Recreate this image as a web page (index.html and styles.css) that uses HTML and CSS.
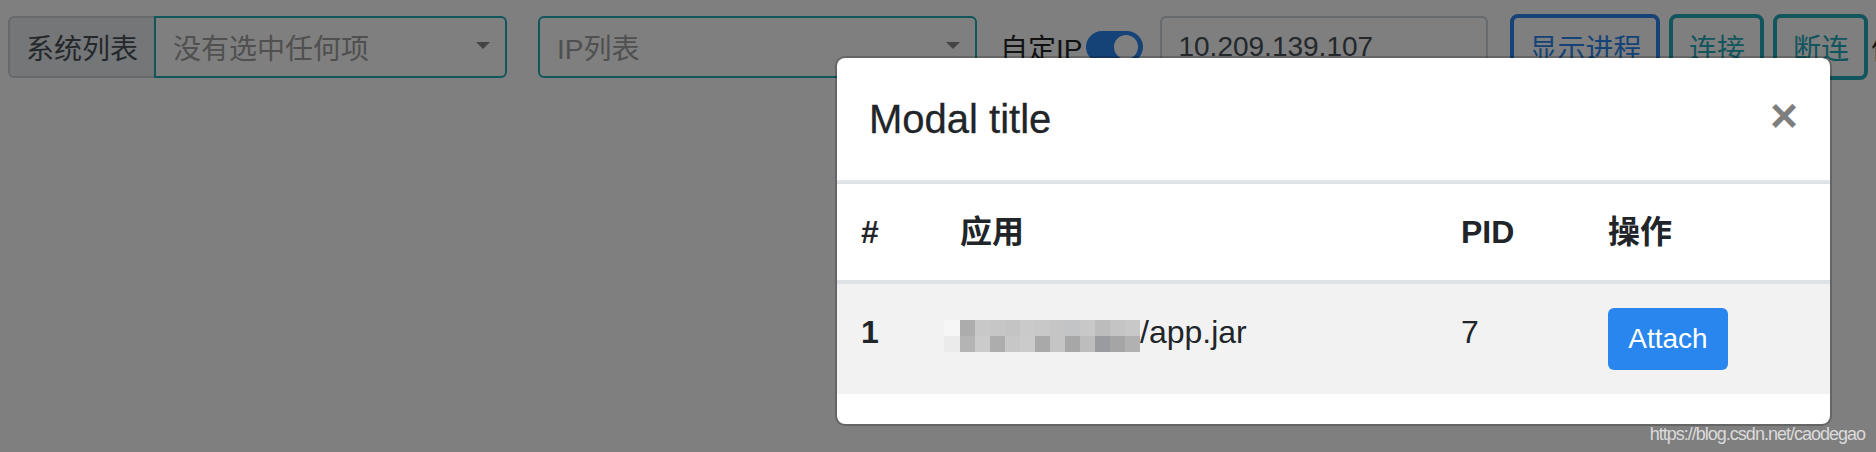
FILE: index.html
```html
<!DOCTYPE html>
<html lang="zh">
<head>
<meta charset="utf-8">
<title>Modal</title>
<link rel="stylesheet" href="styles.css">
</head>
<body>
<div class="toolbar">
  <div class="input-group">
    <span class="addon">系统列表</span>
    <div class="select sel-sys"><span>没有选中任何项</span><span class="caret"></span></div>
  </div>
  <div class="select sel-ip"><span>IP列表</span><span class="caret"></span></div>
  <span class="switch-label">自定IP</span>
  <span class="switch"><span class="knob"></span></span>
  <div class="ip-input">10.209.139.107</div>
  <button class="btn btn-primary-outline">显示进程</button>
  <button class="btn btn-info-outline">连接</button>
  <button class="btn btn-info-outline">断连</button>
  <span class="more">修改</span>
</div>

<div class="backdrop"></div>

<div class="modal">
  <div class="modal-header">
    <h5 class="modal-title">Modal title</h5>
    <button class="close">&times;</button>
  </div>
  <table class="table">
    <colgroup>
      <col class="w1"><col class="w2"><col class="w3"><col class="w4">
    </colgroup>
    <thead>
      <tr><th>#</th><th>应用</th><th>PID</th><th>操作</th></tr>
    </thead>
    <tbody>
      <tr>
        <td class="strong">1</td>
        <td><span class="mosaic"><span class="grid">
          <i style="background:#f6f6f6"></i><i style="background:#acacac"></i><i style="background:#c8c8c8"></i><i style="background:#c6c6c6"></i><i style="background:#c4c4c4"></i><i style="background:#cacaca"></i><i style="background:#c8c8c8"></i><i style="background:#c5c5c5"></i><i style="background:#c2c4c6"></i><i style="background:#c8c8c8"></i><i style="background:#bcbcbc"></i><i style="background:#c4c4c4"></i><i style="background:#c8c8c8"></i>
          <i style="background:#ebebeb"></i><i style="background:#b4b4b4"></i><i style="background:#cbcbcb"></i><i style="background:#adadad"></i><i style="background:#c7c7c7"></i><i style="background:#cbcbcb"></i><i style="background:#a9a9a9"></i><i style="background:#c5c5c5"></i><i style="background:#a7a7a7"></i><i style="background:#bdbdbd"></i><i style="background:#999ba1"></i><i style="background:#a5a5a5"></i><i style="background:#b1b1b1"></i>
        </span></span>/app.jar</td>
        <td>7</td>
        <td><button class="btn-attach">Attach</button></td>
      </tr>
    </tbody>
  </table>
</div>

<div class="watermark">https://blog.csdn.net/caodegao</div>
</body>
</html>
```

FILE: styles.css
```css
* { box-sizing: border-box; }
html, body { margin: 0; padding: 0; }
body {
  width: 1876px;
  height: 452px;
  overflow: hidden;
  position: relative;
  background: #fff;
  font-family: "Liberation Sans", "Noto Sans CJK SC", sans-serif;
  color: #212529;
}

/* ---------- toolbar (behind backdrop) ---------- */
.toolbar {
  display: flex;
  align-items: center;
  padding: 14px 0 0 8px;
  white-space: nowrap;
  font-size: 28px;
}
.toolbar > * { flex-shrink: 0; }

.input-group { display: flex; width: 499px; height: 62px; }
.addon {
  width: 146px;
  display: flex;
  align-items: center;
  justify-content: center;
  background: #e9ecef;
  border: 2px solid #ced4da;
  border-right: 0;
  border-radius: 6px 0 0 6px;
  color: #495057;
}
.select {
  display: flex;
  align-items: center;
  height: 62px;
  padding: 0 15px 0 17px;
  border: 2px solid #22aabb;
  border-radius: 6px;
  background: #fff;
  color: #a0a0a0;
}
.sel-sys { flex: 1; border-radius: 0 6px 6px 0; }
.sel-ip { width: 439px; margin-left: 31px; }
.caret {
  margin-left: auto;
  margin-top: -3px;
  width: 0;
  height: 0;
  border-left: 7px solid transparent;
  border-right: 7px solid transparent;
  border-top: 7px solid #888;
}
.switch-label { margin-left: 23px; color: #212529; }
.switch {
  margin-left: 4px;
  width: 57px;
  height: 32px;
  border-radius: 16px;
  background: #2a86ef;
  display: flex;
  align-items: center;
  justify-content: flex-end;
  padding-right: 5px;
}
.knob { width: 24px; height: 24px; border-radius: 50%; background: #fff; }
.ip-input {
  margin-left: 17px;
  width: 328px;
  height: 62px;
  border: 2px solid #ced4da;
  border-radius: 6px;
  padding-left: 16px;
  display: flex;
  align-items: center;
  color: #495057;
  background: #fff;
}
.btn {
  font: inherit;
  height: 66px;
  border: 4px solid;
  border-radius: 8px;
  background: transparent;
  padding: 0;
  text-align: center;
  margin-left: 9px;
}
.btn-primary-outline { width: 150px; margin-left: 22px; color: #2a86ef; border-color: #2a86ef; }
.btn-info-outline { width: 95px; color: #22aabb; border-color: #22aabb; }
.more { margin-left: 3px; color: #212529; }

/* ---------- backdrop ---------- */
.backdrop {
  position: absolute;
  inset: 0;
  background: rgba(0, 0, 0, 0.5);
}

/* ---------- modal ---------- */
.modal {
  position: absolute;
  left: 835px;
  top: 56px;
  width: 997px;
  background: #fff;
  border: 2px solid rgba(0, 0, 0, 0.2);
  border-radius: 10px;
  background-clip: padding-box;
}
.modal-header {
  display: flex;
  align-items: flex-start;
  padding: 31px 32px;
  border-bottom: 2px solid #e3e6ea;
}
.modal-title {
  margin: 0;
  font-size: 40px;
  line-height: 60px;
  font-weight: normal;
  color: #212529;
  -webkit-text-stroke: 0.3px #212529;
}
.close {
  margin: 3px 0 0 auto;
  padding: 0;
  border: 0;
  background: transparent;
  font-family: "Liberation Sans", sans-serif;
  font-size: 48px;
  font-weight: 700;
  line-height: 48px;
  color: #000;
  opacity: 0.5;
  text-shadow: 0 2px 0 #fff;
}

.table {
  width: 100%;
  table-layout: fixed;
  border-collapse: separate;
  border-spacing: 0;
  margin-bottom: 30px;
  font-size: 32px;
  color: #212529;
}
.w1 { width: 99px; }
.w2 { width: 501px; }
.w3 { width: 147px; }
.w4 { width: 246px; }
.table th {
  text-align: left;
  font-weight: bold;
  padding: 24px;
  line-height: 48px;
  border-top: 2px solid #dee2e6;
  border-bottom: 4px solid #dee2e6;
  vertical-align: bottom;
}
.table td {
  padding: 24px;
  line-height: 48px;
  vertical-align: top;
  white-space: nowrap;
}
.table tbody tr { background: #f2f2f2; }
.table td.strong { font-weight: bold; }

.mosaic {
  display: inline-block;
  overflow: hidden;
  margin-left: -16px;
  vertical-align: -9px;
}
.grid {
  display: grid;
  grid-template-columns: 16px repeat(12, 15px);
  grid-template-rows: 16px 16px;
}
.grid i { display: block; }

.btn-attach {
  display: block;
  width: 120px;
  height: 62px;
  padding: 0;
  border: 0;
  border-radius: 6px;
  background: #2a86ef;
  color: #fff;
  font-family: "Liberation Sans", sans-serif;
  font-size: 28px;
  text-align: center;
}

/* ---------- watermark ---------- */
.watermark {
  position: absolute;
  right: 11px;
  top: 425px;
  font-family: "Liberation Sans", sans-serif;
  font-size: 18px;
  line-height: 18px;
  letter-spacing: -1px;
  color: rgba(255, 255, 255, 0.72);
}
```
